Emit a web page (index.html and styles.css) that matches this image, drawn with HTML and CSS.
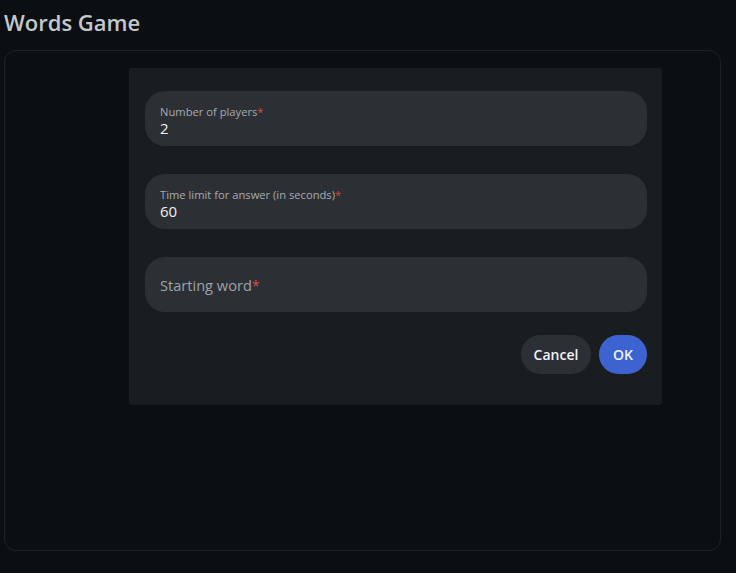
FILE: index.html
```html
<!DOCTYPE html>
<html lang="en">
<head>
<meta charset="utf-8">
<title>Words Game</title>
<link rel="stylesheet" href="styles.css">
</head>
<body>
<div class="page">
  <h1 class="title">Words Game</h1>
  <div class="card">
    <div class="dialog">
      <div class="field">
        <div class="label">Number of players<span class="req">*</span></div>
        <div class="value">2</div>
      </div>
      <div class="field">
        <div class="label">Time limit for answer (in seconds)<span class="req">*</span></div>
        <div class="value">60</div>
      </div>
      <div class="field empty">
        <div class="placeholder">Starting word<span class="req">*</span></div>
      </div>
      <div class="actions">
        <button class="btn cancel">Cancel</button>
        <button class="btn ok">OK</button>
      </div>
    </div>
  </div>
</div>
</body>
</html>
```

FILE: styles.css
```css
html, body {
  margin: 0;
  padding: 0;
  background: #0b0f11;
  height: 100%;
}
body {
  font-family: "Open Sans", "Noto Sans", sans-serif;
  color: #e6e8ea;
}
.page {
  padding: 0 15px 0 4px;
}
.title {
  margin: 0;
  padding-top: 6px;
  height: 50px;
  box-sizing: border-box;
  font-size: 22px;
  font-weight: 600;
  line-height: 32px;
  color: #c4c8cc;
}
.card {
  height: 501px;
  box-sizing: border-box;
  border: 1px solid #1c2125;
  border-radius: 12px;
  padding: 17px 0 0 124px;
}
.dialog {
  width: 533px;
  height: 337px;
  box-sizing: border-box;
  background: #1a1d20;
  border-radius: 3px;
  padding: 23px 15px 0 16px;
  display: flex;
  flex-direction: column;
  gap: 28px;
}
.field {
  height: 55px;
  box-sizing: border-box;
  background: #2c3034;
  border-radius: 20px;
  padding: 13px 15px 0;
  display: flex;
  flex-direction: column;
}
.label {
  font-size: 11.2px;
  line-height: 15px;
  color: #a6abb0;
  height: 15px;
}
.value {
  font-size: 15px;
  line-height: 19px;
  color: #eef0f2;
}
.field.empty {
  justify-content: center;
  padding-top: 0;
}
.placeholder {
  font-size: 14.6px;
  color: #9ea3a8;
  line-height: 20px;
}
.req {
  color: #d14a4a;
}
.actions {
  display: flex;
  justify-content: flex-end;
  gap: 8px;
  margin-top: -5px;
}
.btn {
  height: 39px;
  border: none;
  border-radius: 20px;
  font-family: "Open Sans", "Noto Sans", sans-serif;
  font-weight: 600;
  font-size: 14px;
  color: #f0f2f4;
  padding: 0 10px;
}
.cancel {
  background: #2c3034;
  width: 70px;
}
.ok {
  background: #3d63d1;
  width: 48px;
}
```
